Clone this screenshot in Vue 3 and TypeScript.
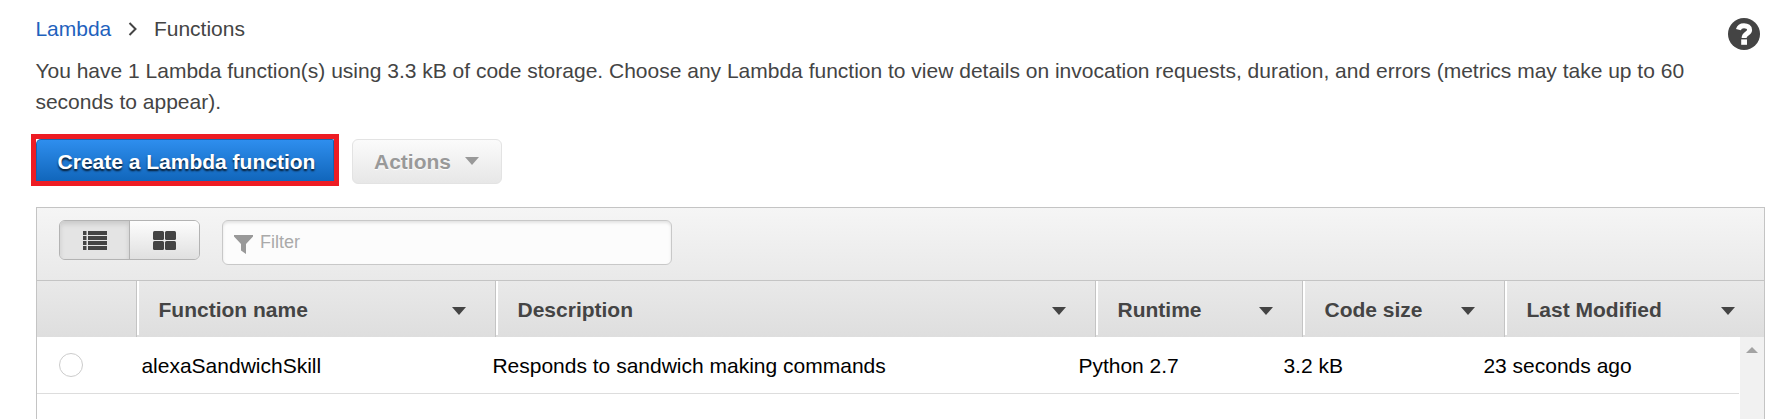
<script setup lang="ts">
interface Column {
  key: string
  label: string
}

interface LambdaFunction {
  name: string
  description: string
  runtime: string
  size: string
  modified: string
}

const columns: Column[] = [
  { key: 'name', label: 'Function name' },
  { key: 'description', label: 'Description' },
  { key: 'runtime', label: 'Runtime' },
  { key: 'size', label: 'Code size' },
  { key: 'modified', label: 'Last Modified' },
]

const functions: LambdaFunction[] = [
  {
    name: 'alexaSandwichSkill',
    description: 'Responds to sandwich making commands',
    runtime: 'Python 2.7',
    size: '3.2 kB',
    modified: '23 seconds ago',
  },
]
</script>

<template>
  <main class="page">
    <header class="top">
      <nav class="crumbs">
        <a class="link">Lambda</a>
        <svg class="chevron" width="10" height="14" viewBox="0 0 10 14">
          <path d="M1.5 1 L7.5 7 L1.5 13" fill="none" stroke="#444" stroke-width="2" />
        </svg>
        <span>Functions</span>
      </nav>
      <svg class="help" width="32" height="32" viewBox="0 0 32 32">
        <circle cx="16" cy="16" r="16" fill="#444" />
        <path d="M10.4 11.6 C11.2 8.8 13.2 7.7 16 7.7 C19.4 7.7 21.6 9.3 21.6 11.9 C21.6 15.6 16.1 15.4 16.1 20" fill="none" stroke="#fff" stroke-width="5" />
        <rect x="13.2" y="21.4" width="5.8" height="5.4" fill="#fff" />
      </svg>
    </header>

    <p class="intro">
      You have 1 Lambda function(s) using 3.3 kB of code storage. Choose any Lambda function to view details on invocation requests, duration, and errors (metrics may take up to 60 seconds to appear).
    </p>

    <div class="actions">
      <div class="highlight">
        <button class="primary">Create a Lambda function</button>
      </div>
      <button class="secondary">
        <span>Actions</span>
        <svg class="caret" width="14" height="8" viewBox="0 0 14 8"><path d="M0 0 H14 L7 8 Z" fill="#999" /></svg>
      </button>
    </div>

    <section class="panel">
      <div class="toolbar">
        <div class="toggle">
          <button class="view active">
            <svg width="24" height="19" viewBox="0 0 24 19" fill="#444">
              <rect x="0" y="0" width="3.5" height="4" /><rect x="5" y="0" width="19" height="4" />
              <rect x="0" y="5" width="3.5" height="4" /><rect x="5" y="5" width="19" height="4" />
              <rect x="0" y="10" width="3.5" height="4" /><rect x="5" y="10" width="19" height="4" />
              <rect x="0" y="15" width="3.5" height="4" /><rect x="5" y="15" width="19" height="4" />
            </svg>
          </button>
          <button class="view">
            <svg width="23" height="19" viewBox="0 0 23 19" fill="#444">
              <rect x="0" y="0" width="11" height="9" rx="1.5" /><rect x="12" y="0" width="11" height="9" rx="1.5" />
              <rect x="0" y="10" width="11" height="9" rx="1.5" /><rect x="12" y="10" width="11" height="9" rx="1.5" />
            </svg>
          </button>
        </div>
        <div class="filter">
          <svg width="19" height="19" viewBox="0 0 19 19"><path d="M0 0 H19 V1.5 L12 9 V19 L7 15.5 V9 L0 1.5 Z" fill="#999" /></svg>
          <span>Filter</span>
        </div>
      </div>

      <div class="head">
        <div class="select-cell"></div>
        <div v-for="col in columns" :key="col.key" class="th">
          <span>{{ col.label }}</span>
          <svg width="14" height="8" viewBox="0 0 14 8"><path d="M0 0 H14 L7 8 Z" fill="#444" /></svg>
        </div>
      </div>

      <div class="body">
        <div class="rows">
          <div v-for="fn in functions" :key="fn.name" class="row">
            <span class="radio"></span>
            <span>{{ fn.name }}</span>
            <span>{{ fn.description }}</span>
            <span>{{ fn.runtime }}</span>
            <span>{{ fn.size }}</span>
            <span>{{ fn.modified }}</span>
          </div>
        </div>
        <div class="scrollbar">
          <svg width="12" height="6" viewBox="0 0 12 6"><path d="M0 6 L6 0 L12 6 Z" fill="#a3a3a3" /></svg>
        </div>
      </div>
    </section>
  </main>
</template>

<style>
body {
  background: #fff;
  overflow: hidden;
}
</style>

<style scoped>
.page {
  box-sizing: border-box;
  width: 1778px;
  height: 419px;
  padding: 0 13px 0 36px;
  overflow: hidden;
  display: flex;
  flex-direction: column;
  font: 21px/31px "Liberation Sans", Arial, sans-serif;
  color: #444;
}
.page > * {
  flex-shrink: 0;
}
.top {
  display: flex;
  justify-content: space-between;
  height: 55px;
  padding: 13px 5px 0 0;
  box-sizing: border-box;
}
.crumbs {
  display: flex;
  margin-left: -0.6px;
}
.link {
  color: #1f62bd;
}
.chevron {
  margin: 9px 16px 0 16.6px;
}
.help {
  margin-top: 5px;
}
.intro {
  margin: 0 0 0 -0.6px;
  width: 1670px;
  height: 79px;
}
.actions {
  display: flex;
  align-items: flex-start;
  gap: 13px;
  height: 73px;
  margin-left: -5px;
}
.highlight {
  border: 5px solid #ed1c24;
  background: #fff;
  width: 298px;
  height: 42px;
}
button {
  font: bold 21px/24px "Liberation Sans", Arial, sans-serif;
  box-sizing: border-box;
  margin: 0;
}
.primary {
  display: block;
  width: 298px;
  height: 42px;
  padding: 2px 0 0 3px;
  border: 1px solid #1563b0;
  border-bottom: 0;
  border-radius: 5px 2px 0 0;
  background: linear-gradient(#2e8eee, #1166bb);
  color: #fff;
  text-shadow: 0 2px 2px rgba(0, 0, 0, 0.8);
}
.secondary {
  display: flex;
  align-items: center;
  width: 150px;
  height: 45px;
  margin-top: 5px;
  padding: 1px 0 0 21px;
  border: 1px solid #e3e3e3;
  border-radius: 6px;
  background: linear-gradient(#fbfbfb, #e7e7e7);
  color: #999;
  text-shadow: 0 1px 1px #fff;
}
.caret {
  margin: -3px 0 0 14px;
}
.panel {
  width: 1729px;
  box-sizing: border-box;
  height: 250px;
  border: 1px solid #c4c4c4;
}
.toolbar {
  display: flex;
  height: 73px;
  box-sizing: border-box;
  padding: 12px 22px;
  gap: 22px;
  border-bottom: 1px solid #c4c4c4;
  background: linear-gradient(#f5f5f5, #e9e9e9);
}
.toggle {
  display: flex;
  width: 141px;
  height: 40px;
  box-sizing: border-box;
  border: 1px solid #b3b3b3;
  border-radius: 6px;
  overflow: hidden;
}
.view {
  flex: 1;
  display: flex;
  align-items: center;
  justify-content: center;
  padding: 1px 0 0;
  border: 0;
  background: linear-gradient(#fdfdfd, #e0e0e0);
}
.active {
  flex: none;
  width: 70px;
  border-right: 1px solid #b3b3b3;
  background: #e4e4e4;
  box-shadow: inset 0 3px 5px rgba(0, 0, 0, 0.12);
}
.filter {
  display: flex;
  width: 450px;
  height: 45px;
  box-sizing: border-box;
  border: 1px solid #c8c8c8;
  border-radius: 6px;
  padding: 14px 11px;
  gap: 7px;
  background: #fcfcfc;
  box-shadow: inset 0 2px 3px rgba(0, 0, 0, 0.1);
  font-size: 18px;
  line-height: 20px;
  color: #aaa;
}
.filter span {
  margin-top: -3px;
}
.head {
  display: grid;
  grid-template-columns: 99px 359px 600px 207px 202px 260px;
  height: 56px;
  background: linear-gradient(#e9e9e9, #dedede);
  font-weight: bold;
}
.th {
  display: flex;
  justify-content: space-between;
  align-items: center;
  padding: 0 29px 0 21.5px;
  border-left: 1px solid #c4c4c4;
  background: linear-gradient(#fff, #fff) 0 0 / 2px 54px no-repeat;
}
.th svg {
  margin-top: 4px;
}
.body {
  display: flex;
  height: 110px;
}
.rows {
  flex: 1;
  padding-right: 1px;
}
.row {
  display: grid;
  grid-template-columns: 82.4px 351px 586px 205px 200px 1fr;
  height: 57px;
  box-sizing: border-box;
  padding-left: 22px;
  align-items: center;
  border-bottom: 1px solid #ddd;
  color: #000;
}
.radio {
  width: 24px;
  height: 24px;
  box-sizing: border-box;
  border: 1px solid #ccc;
  border-radius: 50%;
}
.scrollbar {
  width: 24px;
  background: #f1f1f1;
  display: flex;
  justify-content: center;
  padding-top: 10px;
  box-sizing: border-box;
}
</style>
